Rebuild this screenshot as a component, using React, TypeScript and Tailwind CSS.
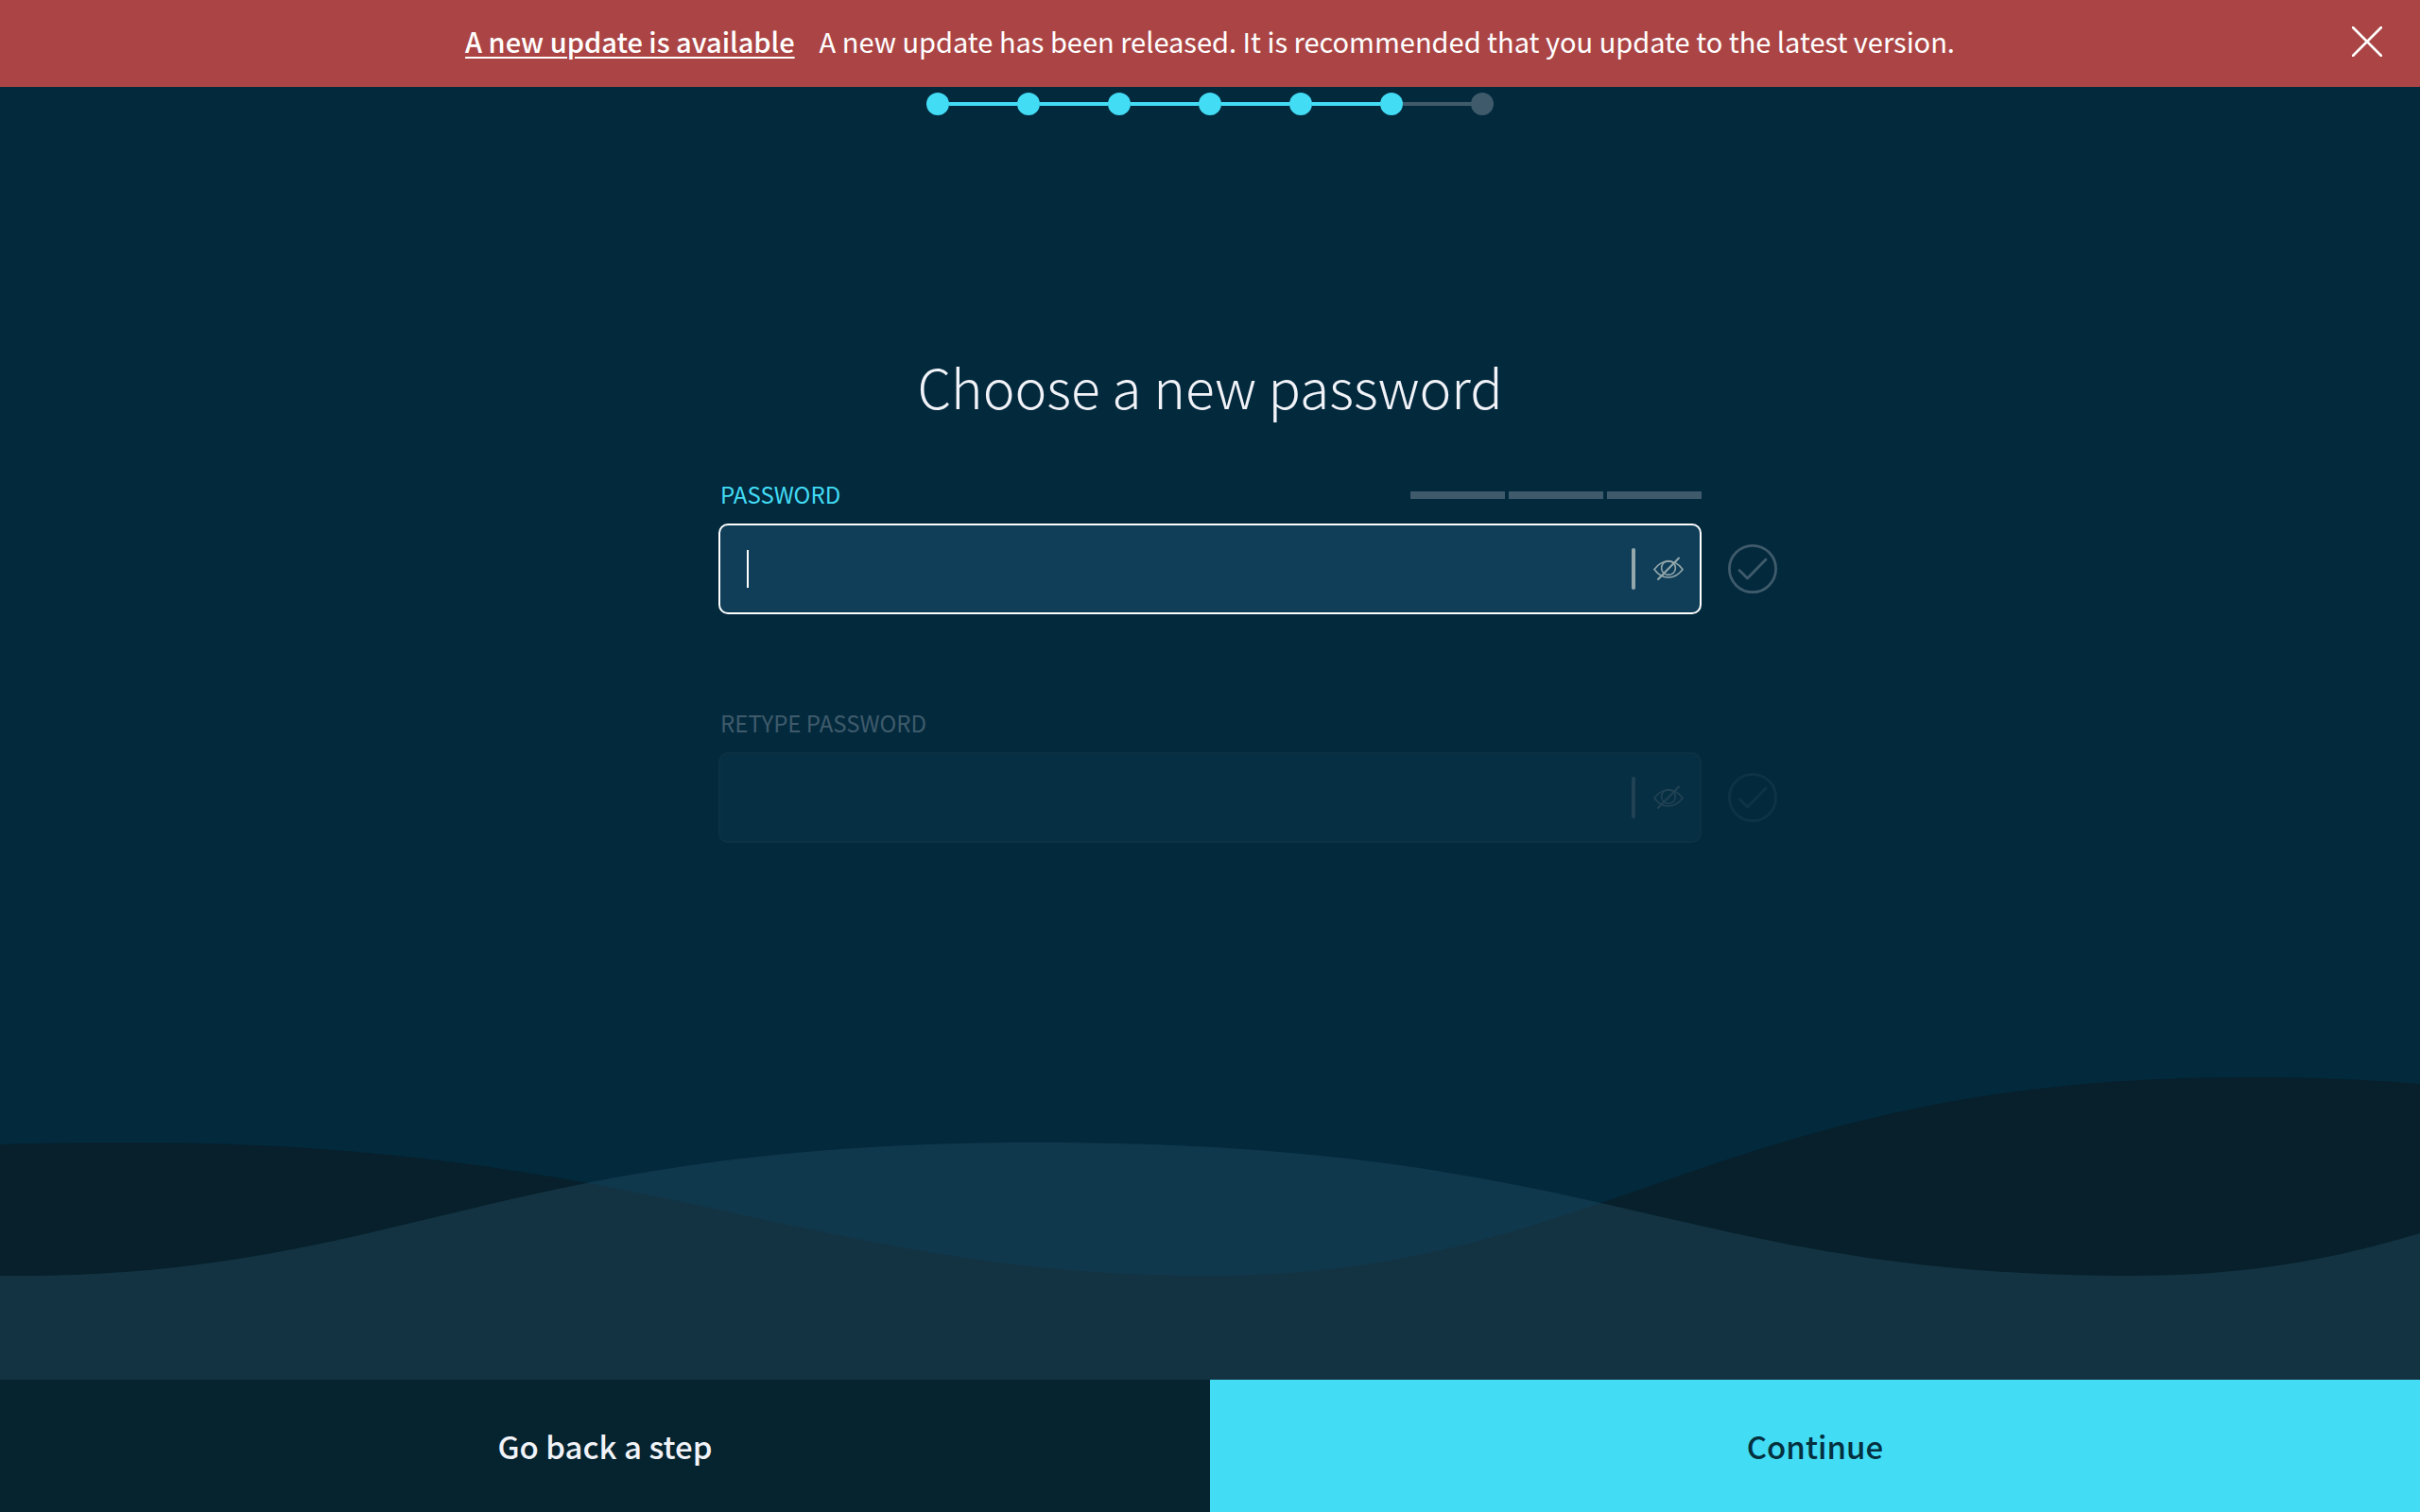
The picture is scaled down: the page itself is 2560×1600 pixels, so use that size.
import React, { useState } from "react";

const STEPS = 7;
const CURRENT_STEP = 6;

function UpdateBanner() {
  return (
    <div className="relative flex h-[92px] shrink-0 items-center justify-center bg-[#ab4545] px-24 text-[29px] leading-10 text-white">
      <p className="flex gap-[26px] pb-1.5">
        <a href="#update" className="font-medium underline decoration-2 underline-offset-4">
          A new update is available
        </a>
        <span>
          A new update has been released. It is recommended that you update to the latest version.
        </span>
      </p>
      <button type="button" aria-label="Dismiss" className="absolute right-10 flex size-8 items-center justify-center pb-1">
        <svg viewBox="0 0 32 32" className="size-8 shrink-0" fill="none" stroke="currentColor" strokeWidth="2.6" strokeLinecap="round">
          <path d="M1 1 31 31M31 1 1 31" />
        </svg>
      </button>
    </div>
  );
}

function StepIndicator() {
  return (
    <ol aria-label="Setup progress" className="mt-1.5 flex items-center justify-center">
      {Array.from({ length: STEPS }, (_, i) => (
        <li key={i} className="flex items-center" aria-current={i === CURRENT_STEP - 1 ? "step" : undefined}>
          {i > 0 && <span className={i < CURRENT_STEP ? "h-1 w-[72px] bg-[#42dcf5]" : "h-1 w-[72px] bg-[#3f5b6b]"} />}
          <span className={i < CURRENT_STEP ? "size-6 rounded-full bg-[#42dcf5]" : "size-6 rounded-full bg-[#3f5b6b]"} />
        </li>
      ))}
    </ol>
  );
}

function EyeOffIcon() {
  return (
    <svg viewBox="0 0 32 26" className="h-[26px] w-8" fill="none" stroke="currentColor" strokeWidth="1.6" strokeLinecap="round">
      <path d="M1 13.5C5 8 10.500 5 16 5s11 3 15 8.500C27 19 21.500 22 16 22S5 19 1 13.500Z" />
      <circle cx="16" cy="12" r="7.400" />
      <path d="M5 24 27 1.500" strokeWidth="2" />
    </svg>
  );
}

function CheckCircleIcon() {
  return (
    <svg viewBox="0 0 52 52" className="size-[52px]" fill="none" stroke="currentColor" strokeWidth="2.8" strokeLinecap="round" strokeLinejoin="round">
      <circle cx="26" cy="26" r="24.600" />
      <path d="M12 27.500 20.500 36 40 16" />
    </svg>
  );
}

type FieldProps = {
  id: string;
  label: string;
  disabled?: boolean;
  focused?: boolean;
  children?: React.ReactNode;
};

function PasswordField({ id, label, disabled, focused, children }: FieldProps) {
  const [value, setValue] = useState("");
  const [visible, setVisible] = useState(false);
  return (
    <div>
      <div className="flex h-9 items-center justify-between">
        <label
          htmlFor={id}
          className={disabled ? "pb-0.5 pl-0.5 text-2xl leading-8 text-[#3f5b6b]" : "pb-0.5 pl-0.5 text-2xl leading-8 text-[#42dcf5]"}
        >
          {label}
        </label>
        {children}
      </div>
      <div className={disabled ? "relative mt-3 opacity-20" : "relative mt-3"}>
        <div
          className={
            focused
              ? "flex h-24 items-center rounded-[10px] border-2 border-white bg-[#103e58] pr-[17px]"
              : "flex h-24 items-center rounded-[10px] border-2 border-[#2e5263] bg-[#174762] pr-[17px]"
          }
        >
          <input
            id={id}
            type={visible ? "text" : "password"}
            value={value}
            disabled={disabled}
            onChange={(e) => setValue(e.target.value)}
            className="h-full min-w-0 flex-1 bg-transparent px-7 text-3xl text-white caret-transparent outline-none"
          />
          {focused && value === "" && <span className="pointer-events-none absolute left-[30px] h-10 w-0.5 bg-white" />}
          <span className="h-11 w-1 rounded-full bg-[#94a8ac]" />
          <button
            type="button"
            disabled={disabled}
            aria-label={visible ? "Hide password" : "Show password"}
            onClick={() => setVisible(!visible)}
            className="ml-[19px] text-[#94a8ac]"
          >
            <EyeOffIcon />
          </button>
        </div>
        <span className="absolute top-[22px] left-full ml-7 text-[#3f5b6b]">
          <CheckCircleIcon />
        </span>
      </div>
    </div>
  );
}

function Waves() {
  return (
    <svg
      aria-hidden="true"
      viewBox="0 0 2560 320"
      preserveAspectRatio="none"
      className="pointer-events-none absolute bottom-0 left-0 h-80 w-full"
    >
      <path
        fill="#07202b"
        d="M0 71C45 69.500 90 69 139 69C688 69 860 210 1280 210C1697 210 1814 0 2378 0C2440 0 2500 2 2560 7V320H0Z"
      />
      <path
        fill="#29556b"
        fillOpacity="0.37"
        d="M0 210H20C419 210 532 69 1094 69C1704 69 1772 210 2255 210C2370 210 2460 195 2560 165V320H0Z"
      />
    </svg>
  );
}

export default function App() {
  return (
    <div className="flex min-h-screen flex-col bg-[#03293d] font-['Noto_Sans_CJK_SC',sans-serif] text-[#f1f3f8]">
      <UpdateBanner />
      <main className="relative flex flex-1 flex-col">
        <Waves />
        <StepIndicator />
        <form className="relative mx-auto mt-[242px] w-full max-w-[1040px]">
          <h1 className="text-center text-[57px] leading-[88px] font-light">Choose a new password</h1>
          <div className="mt-[54px]">
            <PasswordField id="password" label="PASSWORD" focused>
              <div role="img" aria-label="Password strength" className="flex gap-1">
                <span className="h-2 w-[100px] bg-[#3f5b6b]" />
                <span className="h-2 w-[100px] bg-[#3f5b6b]" />
                <span className="h-2 w-[100px] bg-[#3f5b6b]" />
              </div>
            </PasswordField>
          </div>
          <div className="mt-[98px]">
            <PasswordField id="retype-password" label="RETYPE PASSWORD" disabled />
          </div>
        </form>
      </main>
      <footer className="grid h-[140px] shrink-0 grid-cols-2 text-[33px] font-medium">
        <button type="button" className="bg-[#052430] pt-0.5 text-[#f1f3f8]">
          Go back a step
        </button>
        <button type="button" className="bg-[#42dcf5] pt-0.5 text-[#04303f]">
          Continue
        </button>
      </footer>
    </div>
  );
}
